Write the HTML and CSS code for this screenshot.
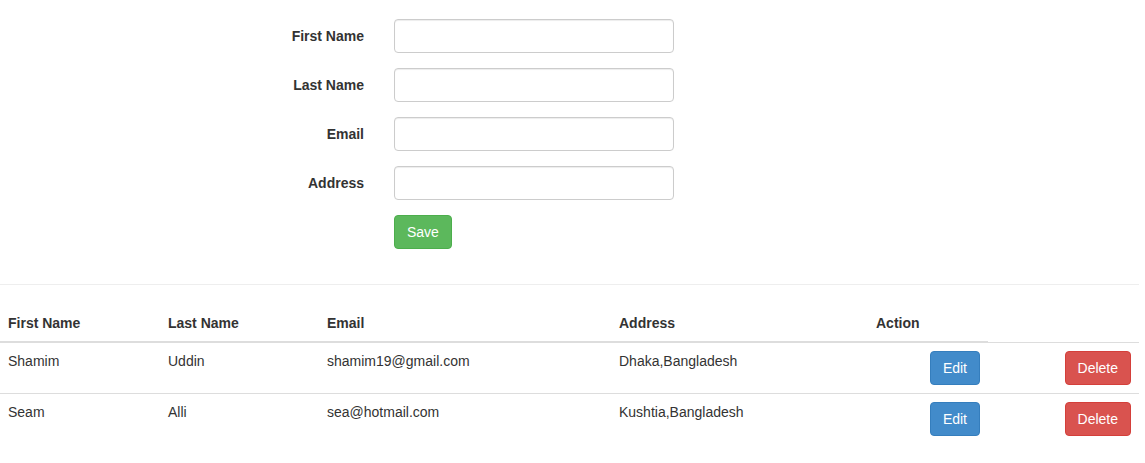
FILE: index.html
```html
<!DOCTYPE html>
<html>
<head>
<meta charset="utf-8">
<link rel="stylesheet" href="styles.css">
</head>
<body>
<div class="page">
  <form class="entry-form">
    <div class="form-group">
      <label class="form-label">First Name</label>
      <div class="form-field"><input class="form-input" type="text"></div>
    </div>
    <div class="form-group">
      <label class="form-label">Last Name</label>
      <div class="form-field"><input class="form-input" type="text"></div>
    </div>
    <div class="form-group">
      <label class="form-label">Email</label>
      <div class="form-field"><input class="form-input" type="text"></div>
    </div>
    <div class="form-group">
      <label class="form-label">Address</label>
      <div class="form-field"><input class="form-input" type="text"></div>
    </div>
    <div class="form-group">
      <div class="form-label"></div>
      <div class="form-field"><button type="button" class="btn btn-success">Save</button></div>
    </div>
  </form>
  <hr class="divider">
  <table class="data-table">
    <thead>
      <tr>
        <th class="col-first">First Name</th>
        <th class="col-last">Last Name</th>
        <th class="col-email">Email</th>
        <th class="col-address">Address</th>
        <th class="col-action">Action</th>
      </tr>
    </thead>
    <tbody>
      <tr>
        <td>Shamim</td>
        <td>Uddin</td>
        <td>shamim19@gmail.com</td>
        <td>Dhaka,Bangladesh</td>
        <td class="cell-btn"><button type="button" class="btn btn-primary">Edit</button></td>
        <td class="cell-btn"><button type="button" class="btn btn-danger">Delete</button></td>
      </tr>
      <tr>
        <td>Seam</td>
        <td>Alli</td>
        <td>sea@hotmail.com</td>
        <td>Kushtia,Bangladesh</td>
        <td class="cell-btn"><button type="button" class="btn btn-primary">Edit</button></td>
        <td class="cell-btn"><button type="button" class="btn btn-danger">Delete</button></td>
      </tr>
    </tbody>
  </table>
</div>
</body>
</html>
```

FILE: styles.css
```css
* {
  box-sizing: border-box;
}

html, body {
  margin: 0;
  padding: 0;
  background: #fff;
}

body {
  font-family: "Liberation Sans", Arial, Helvetica, sans-serif;
  font-size: 14px;
  line-height: 20px;
  color: #333;
}

.page {
  width: 1139px;
  padding-top: 19px;
}

.entry-form {
  display: flex;
  flex-direction: column;
}

.form-group {
  display: flex;
  margin-bottom: 15px;
}

.form-label {
  width: 379px;
  padding-right: 15px;
  padding-top: 7px;
  text-align: right;
  font-weight: bold;
}

.form-field {
  padding-left: 15px;
}

.form-input {
  display: block;
  width: 280px;
  height: 34px;
  padding: 6px 12px;
  font-family: inherit;
  font-size: 14px;
  color: #555;
  background: #fff;
  border: 1px solid #ccc;
  border-radius: 4px;
  box-shadow: inset 0 1px 1px rgba(0, 0, 0, 0.075);
  outline: none;
}

.btn {
  display: inline-block;
  height: 34px;
  padding: 6px 12px;
  font-family: inherit;
  font-size: 14px;
  line-height: 20px;
  color: #fff;
  border: 1px solid transparent;
  border-radius: 4px;
  cursor: pointer;
  vertical-align: top;
}

.btn-success {
  background: #5cb85c;
  border-color: #4cae4c;
}

.btn-primary {
  background: #428bca;
  border-color: #357ebd;
}

.btn-danger {
  background: #d9534f;
  border-color: #d43f3a;
}

.divider {
  margin: 20px 0;
  border: 0;
  border-top: 1px solid #eee;
  height: 0;
}

.data-table {
  width: 1139px;
  border-collapse: collapse;
  border-spacing: 0;
}

.data-table th,
.data-table td {
  padding: 8px;
  text-align: left;
  vertical-align: top;
  line-height: 20px;
}

.data-table th {
  font-weight: bold;
  vertical-align: bottom;
  border-bottom: 2px solid #ddd;
}

.data-table td {
  border-top: 1px solid #ddd;
}

.col-first { width: 160px; }
.col-last { width: 159px; }
.col-email { width: 292px; }
.col-address { width: 257px; }
.col-action { width: 120px; }

.data-table td.cell-btn {
  text-align: right;
}
```
